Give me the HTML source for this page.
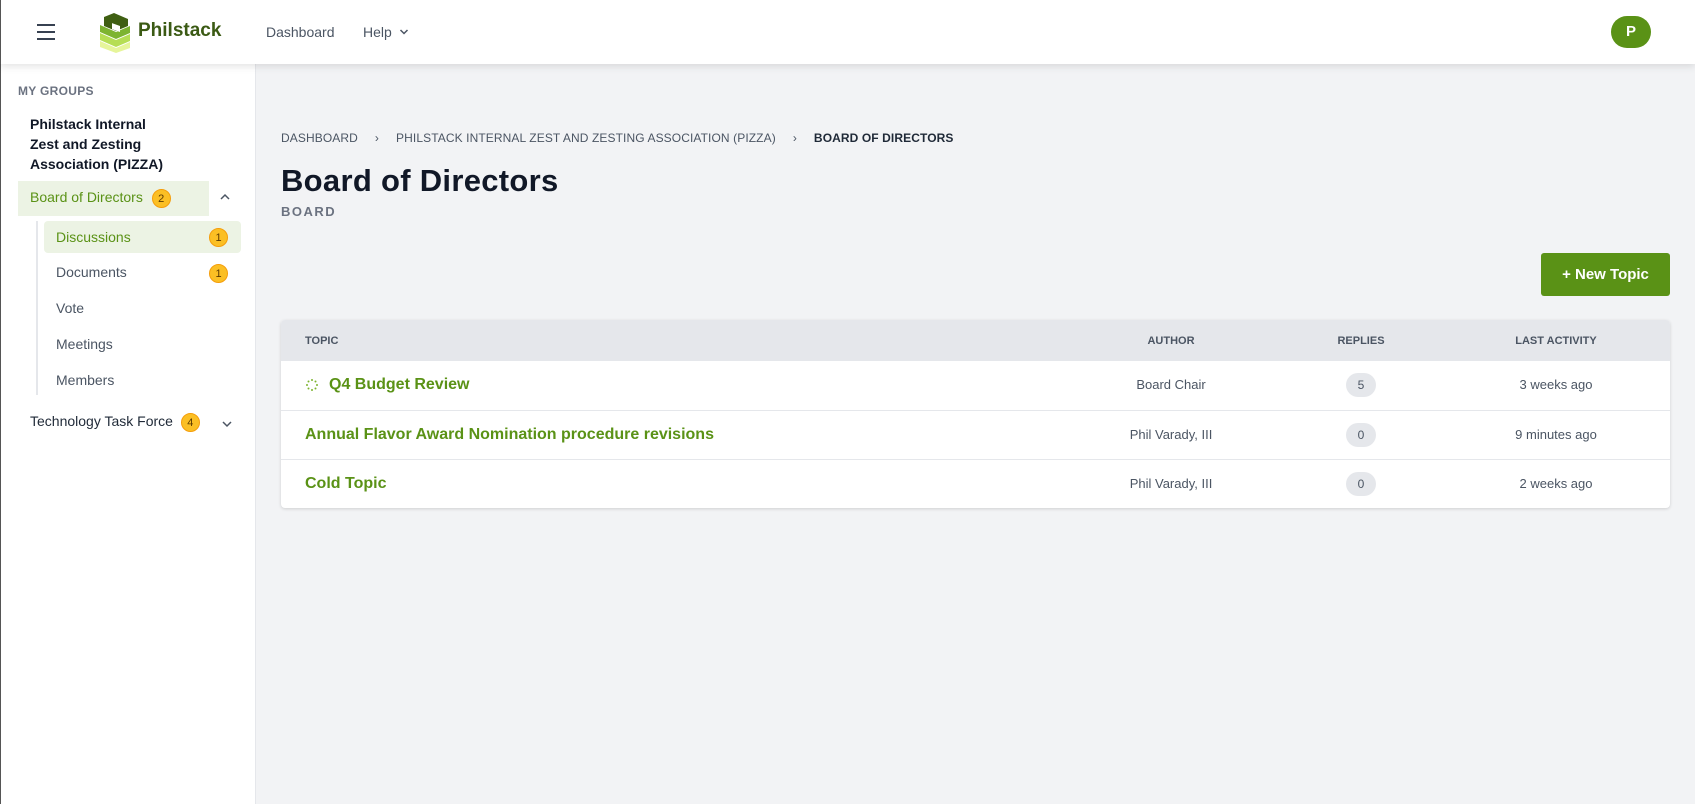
<!DOCTYPE html>
<html><head><meta charset="utf-8"><style>
*{box-sizing:border-box;margin:0;padding:0}
body{width:1695px;height:804px;overflow:hidden;background:#f2f3f5;font-family:"Liberation Sans",sans-serif;position:relative;color:#1f2937}
.hdr{position:absolute;left:0;top:0;width:1695px;height:64px;background:#fff;box-shadow:0 2px 8px rgba(0,0,0,.12);z-index:2;border-left:1px solid #555}
.side{position:absolute;left:0;top:64px;width:256px;height:740px;background:#fff;border-left:1px solid #555;border-right:1px solid #e5e7eb}
.abs{position:absolute}
.badge{display:inline-block;width:19px;height:19px;border-radius:50%;background:#fbbf24;border:1px solid #f59e0b;color:#5b3a00;font-size:11px;text-align:center;line-height:18px;vertical-align:middle}
.sub{position:absolute;left:55px;font-size:14px;color:#4b5563}
.th{position:absolute;top:15px;font-size:11px;font-weight:bold;color:#4b5563;transform:translateX(-50%)}
.row{position:absolute;left:0;width:1389px;height:49px;border-top:1px solid #e5e7eb}
.t{position:absolute;left:24px;top:15px;font-size:16px;font-weight:bold;color:#5a9216}
.c{position:absolute;top:16px;font-size:13px;color:#4b5563;transform:translateX(-50%)}
.pill{position:absolute;top:12px;width:30px;height:24px;border-radius:12px;background:#e5e7eb;font-size:12px;color:#4b5563;text-align:center;line-height:24px;transform:translateX(-50%)}
</style></head><body>
<div class="hdr">
  <div class="abs" style="left:36px;top:24px;width:18px;height:2px;background:#374151;box-shadow:0 7px 0 #374151,0 14px 0 #374151"></div>
  <svg class="abs" style="left:97px;top:13px" width="34" height="40" viewBox="0 0 34 40">
    <polygon points="2,28 18,35 32,29 32,35 18,40 2,34" fill="#e6f59a"/>
    <polygon points="2,20 18,27 32,21 32,28 18,34 2,27" fill="#b6de54"/>
    <polygon points="2,12 18,19 32,13 32,20 18,26 2,19" fill="#7db430"/>
    <polygon points="6,4 16,0 30,6 30,13 18,18 6,13" fill="#3f5f12"/>
    <rect x="14" y="5" width="8" height="6" fill="#fff" transform="skewY(20)"/>
  </svg>
  <div class="abs" style="left:137px;top:20px;font-size:19px;font-weight:bold;color:#3b5a14">Philstack</div>
  <div class="abs" style="left:265px;top:24px;font-size:14px;color:#4b5563">Dashboard</div>
  <div class="abs" style="left:362px;top:24px;font-size:14px;color:#4b5563">Help</div>
  <svg class="abs" style="left:398px;top:28px" width="10" height="8" viewBox="0 0 10 8"><path d="M1.5 2 L5 5.5 L8.5 2" fill="none" stroke="#4b5563" stroke-width="1.5"/></svg>
  <div class="abs" style="left:1610px;top:16px;width:40px;height:32px;border-radius:16px;background:#5a9216;color:#fff;font-weight:bold;font-size:15px;text-align:center;line-height:32px">P</div>
</div>
<div class="side">
  <div class="abs" style="left:17px;top:20px;font-size:12px;font-weight:bold;color:#6b7280;letter-spacing:.3px">MY GROUPS</div>
  <div class="abs" style="left:29px;top:50px;font-size:14px;font-weight:bold;color:#111827;line-height:20px;width:138px">Philstack Internal Zest and Zesting Association (PIZZA)</div>
  <div class="abs" style="left:17px;top:117px;width:191px;height:35px;background:#ecf3e4"></div>
  <div class="abs" style="left:29px;top:125px;font-size:14px;color:#5a9216">Board of Directors <span class="badge" style="margin-left:5px">2</span></div>
  <svg class="abs" style="left:218px;top:129px" width="12" height="8" viewBox="0 0 12 8"><path d="M2 6 L6 2 L10 6" fill="none" stroke="#4b5563" stroke-width="1.5"/></svg>
  <div class="abs" style="left:35px;top:157px;width:2px;height:174px;background:#e5e7eb"></div>
  <div class="abs" style="left:43px;top:157px;width:197px;height:32px;background:#ecf3e4;border-radius:4px"></div>
  <div class="sub" style="top:165px;color:#5a9216">Discussions</div><span class="badge abs" style="left:208px;top:164px">1</span>
  <div class="sub" style="top:200px">Documents</div><span class="badge abs" style="left:208px;top:200px">1</span>
  <div class="sub" style="top:236px">Vote</div>
  <div class="sub" style="top:272px">Meetings</div>
  <div class="sub" style="top:308px">Members</div>
  <div class="abs" style="left:29px;top:349px;font-size:14px;color:#1f2937">Technology Task Force <span class="badge" style="margin-left:4px">4</span></div>
  <svg class="abs" style="left:220px;top:356px" width="12" height="8" viewBox="0 0 12 8"><path d="M2 2 L6 6 L10 2" fill="none" stroke="#4b5563" stroke-width="1.5"/></svg>
</div>
<div class="abs" style="left:281px;top:131px;font-size:12px;color:#4b5563;letter-spacing:.1px;white-space:nowrap">DASHBOARD<span style="margin:0 17px">&#8250;</span>PHILSTACK INTERNAL ZEST AND ZESTING ASSOCIATION (PIZZA)<span style="margin:0 17px">&#8250;</span><b style="color:#1f2937">BOARD OF DIRECTORS</b></div>
<div class="abs" style="left:281px;top:163px;font-size:31px;font-weight:900;color:#111827;letter-spacing:.3px">Board of Directors</div>
<div class="abs" style="left:281px;top:204px;font-size:13px;font-weight:bold;color:#6b7280;letter-spacing:1.5px">BOARD</div>
<div class="abs" style="left:1541px;top:253px;width:129px;height:43px;background:#5a9216;border-radius:3px;color:#fff;font-weight:bold;font-size:15px;text-align:center;line-height:43px">+ New Topic</div>
<div class="abs" style="left:281px;top:320px;width:1389px;height:188px;background:#fff;border-radius:4px;box-shadow:0 1px 3px rgba(0,0,0,.15);overflow:hidden">
  <div class="abs" style="left:0;top:0;width:1389px;height:41px;background:#e5e7eb"></div>
  <div class="th" style="transform:none;left:24px">TOPIC</div>
  <div class="th" style="left:890px">AUTHOR</div>
  <div class="th" style="left:1080px">REPLIES</div>
  <div class="th" style="left:1275px">LAST ACTIVITY</div>
  <div class="row" style="top:41px;border-top:none">
    <svg class="abs" style="left:25px;top:18px" width="12" height="12" viewBox="0 0 12 12" fill="#7db430"><circle cx="6" cy="1" r="1"/><circle cx="11" cy="6" r="1"/><circle cx="6" cy="11" r="1"/><circle cx="1" cy="6" r="1"/><circle cx="9.5" cy="2.5" r="1"/><circle cx="9.5" cy="9.5" r="1"/><circle cx="2.5" cy="9.5" r="1"/><circle cx="2.5" cy="2.5" r="1"/></svg>
    <div class="t" style="left:48px">Q4 Budget Review</div>
    <div class="c" style="left:890px">Board Chair</div><div class="pill" style="left:1080px">5</div><div class="c" style="left:1275px">3 weeks ago</div>
  </div>
  <div class="row" style="top:90px">
    <div class="t">Annual Flavor Award Nomination procedure revisions</div>
    <div class="c" style="left:890px">Phil Varady, III</div><div class="pill" style="left:1080px">0</div><div class="c" style="left:1275px">9 minutes ago</div>
  </div>
  <div class="row" style="top:139px">
    <div class="t">Cold Topic</div>
    <div class="c" style="left:890px">Phil Varady, III</div><div class="pill" style="left:1080px">0</div><div class="c" style="left:1275px">2 weeks ago</div>
  </div>
</div>
</body></html>
